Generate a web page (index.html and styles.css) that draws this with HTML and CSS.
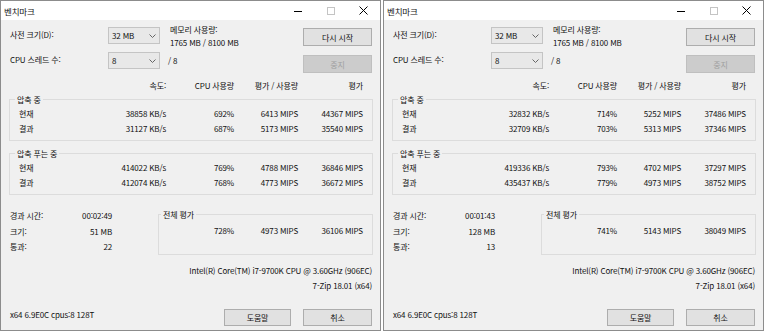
FILE: index.html
```html
<!DOCTYPE html>
<html lang="ko">
<head>
    <meta charset="UTF-8">
    <title>벤치마크</title>
    <link rel="stylesheet" href="styles.css">
</head>
<body>
    <div class="win">
        <div class="titlebar">
            <div class="title">벤치마크</div>
            <div class="caps">
                <div class="cap"><svg width="8" height="8" viewBox="0 0 8 8"><path d="M0 4.5H8" stroke="#000" stroke-width="1"/></svg></div>
                <div class="cap"><svg width="8" height="8" viewBox="0 0 8 8"><rect x="0.5" y="0.5" width="7" height="7" fill="none" stroke="#c4c4c4"/></svg></div>
                <div class="cap"><svg width="9" height="9" viewBox="0 0 9 9"><path d="M0.5 0.5L8.5 8.5M8.5 0.5L0.5 8.5" stroke="#000" stroke-width="1"/></svg></div>
            </div>
        </div>
        <div class="content">
            <div class="top">
                <div class="lbl">사전 크기(D):</div>
                <div class="combo"><span>32 MB</span><svg class="chev" width="7" height="4" viewBox="0 0 7 4"><path d="M0.5 0.5L3.5 3.5L6.5 0.5" fill="none" stroke="#666"/></svg></div>
                <div class="mem">메모리 사용량:<br>1765 MB / 8100 MB</div>
                <button class="btn first">다시 시작</button>
                <div class="lbl">CPU 스레드 수:</div>
                <div class="combo"><span>8</span><svg class="chev" width="7" height="4" viewBox="0 0 7 4"><path d="M0.5 0.5L3.5 3.5L6.5 0.5" fill="none" stroke="#666"/></svg></div>
                <div class="threads">/ 8</div>
                <button class="btn off">중지</button>
            </div>

            <div class="cols head">
                <span></span><span>속도:</span><span>CPU 사용량</span><span>평가 / 사용량</span><span>평가</span>
            </div>

            <fieldset class="group">
                <legend>압축 중</legend>
                <div class="cols"><span class="name">현재</span><span>38858 KB/s</span><span>692%</span><span>6413 MIPS</span><span>44367 MIPS</span></div>
                <div class="cols"><span class="name">결과</span><span>31127 KB/s</span><span>687%</span><span>5173 MIPS</span><span>35540 MIPS</span></div>
            </fieldset>

            <fieldset class="group second">
                <legend>압축 푸는 중</legend>
                <div class="cols"><span class="name">현재</span><span>414022 KB/s</span><span>769%</span><span>4788 MIPS</span><span>36846 MIPS</span></div>
                <div class="cols"><span class="name">결과</span><span>412074 KB/s</span><span>768%</span><span>4773 MIPS</span><span>36672 MIPS</span></div>
            </fieldset>

            <div class="bottom">
                <div class="stats">
                    <span>경과 시간:</span><span>00:02:49</span>
                    <span>크기:</span><span>51 MB</span>
                    <span>통과:</span><span>22</span>
                </div>
                <fieldset class="total">
                    <legend>전체 평가</legend>
                    <div class="sum"><span>728%</span><span>4973 MIPS</span><span>36106 MIPS</span></div>
                </fieldset>
            </div>

            <div class="info">Intel(R) Core(TM) i7-9700K CPU @ 3.60GHz (906EC)</div>
            <div class="info">7-Zip 18.01 (x64)</div>

            <div class="footer">
                <div class="ver">x64 6.9E0C cpus:8 128T</div>
                <button class="btn help">도움말</button>
                <button class="btn cancel">취소</button>
            </div>
        </div>
    </div>

    <div class="win">
        <div class="titlebar">
            <div class="title">벤치마크</div>
            <div class="caps">
                <div class="cap"><svg width="8" height="8" viewBox="0 0 8 8"><path d="M0 4.5H8" stroke="#000" stroke-width="1"/></svg></div>
                <div class="cap"><svg width="8" height="8" viewBox="0 0 8 8"><rect x="0.5" y="0.5" width="7" height="7" fill="none" stroke="#c4c4c4"/></svg></div>
                <div class="cap"><svg width="9" height="9" viewBox="0 0 9 9"><path d="M0.5 0.5L8.5 8.5M8.5 0.5L0.5 8.5" stroke="#000" stroke-width="1"/></svg></div>
            </div>
        </div>
        <div class="content">
            <div class="top">
                <div class="lbl">사전 크기(D):</div>
                <div class="combo"><span>32 MB</span><svg class="chev" width="7" height="4" viewBox="0 0 7 4"><path d="M0.5 0.5L3.5 3.5L6.5 0.5" fill="none" stroke="#666"/></svg></div>
                <div class="mem">메모리 사용량:<br>1765 MB / 8100 MB</div>
                <button class="btn first">다시 시작</button>
                <div class="lbl">CPU 스레드 수:</div>
                <div class="combo"><span>8</span><svg class="chev" width="7" height="4" viewBox="0 0 7 4"><path d="M0.5 0.5L3.5 3.5L6.5 0.5" fill="none" stroke="#666"/></svg></div>
                <div class="threads">/ 8</div>
                <button class="btn off">중지</button>
            </div>

            <div class="cols head">
                <span></span><span>속도:</span><span>CPU 사용량</span><span>평가 / 사용량</span><span>평가</span>
            </div>

            <fieldset class="group">
                <legend>압축 중</legend>
                <div class="cols"><span class="name">현재</span><span>32832 KB/s</span><span>714%</span><span>5252 MIPS</span><span>37486 MIPS</span></div>
                <div class="cols"><span class="name">결과</span><span>32709 KB/s</span><span>703%</span><span>5313 MIPS</span><span>37346 MIPS</span></div>
            </fieldset>

            <fieldset class="group second">
                <legend>압축 푸는 중</legend>
                <div class="cols"><span class="name">현재</span><span>419336 KB/s</span><span>793%</span><span>4702 MIPS</span><span>37297 MIPS</span></div>
                <div class="cols"><span class="name">결과</span><span>435437 KB/s</span><span>779%</span><span>4973 MIPS</span><span>38752 MIPS</span></div>
            </fieldset>

            <div class="bottom">
                <div class="stats">
                    <span>경과 시간:</span><span>00:01:43</span>
                    <span>크기:</span><span>128 MB</span>
                    <span>통과:</span><span>13</span>
                </div>
                <fieldset class="total">
                    <legend>전체 평가</legend>
                    <div class="sum"><span>741%</span><span>5143 MIPS</span><span>38049 MIPS</span></div>
                </fieldset>
            </div>

            <div class="info">Intel(R) Core(TM) i7-9700K CPU @ 3.60GHz (906EC)</div>
            <div class="info">7-Zip 18.01 (x64)</div>

            <div class="footer">
                <div class="ver">x64 6.9E0C cpus:8 128T</div>
                <button class="btn help">도움말</button>
                <button class="btn cancel">취소</button>
            </div>
        </div>
    </div>
</body>
</html>
```

FILE: styles.css
```css
* {
    box-sizing: border-box;
}

body {
    margin: 0;
    display: flex;
    gap: 2px;
    background: #fff;
    font-family: "Noto Sans CJK KR", "Liberation Sans", sans-serif;
    font-size: 8px;
    letter-spacing: -0.15px;
    color: #111;
}

.win {
    width: 381px;
    height: 331px;
    border: 1px solid #8c8c8c;
    background: #f0f0f0;
    display: flex;
    flex-direction: column;
}

.titlebar {
    height: 19px;
    background: #fff;
    display: flex;
    align-items: center;
    padding-left: 3px;
}

.title {
    flex: 1;
    font-size: 8.5px;
}

.caps {
    display: flex;
}

.cap {
    width: 33px;
    height: 19px;
    display: flex;
    align-items: center;
    justify-content: center;
}

.cap svg {
    display: block;
}

.content {
    padding: 7px 7px 0 8px;
}

/* top controls */
.top {
    display: grid;
    grid-template-columns: 99px 52px 1fr 70px;
    grid-template-rows: 19px 21px;
    row-gap: 6px;
}

.lbl {
    padding-left: 1px;
    line-height: 16px;
}

.combo {
    height: 17px;
    background: #e8e8e8;
    border: 1px solid #c4c4c4;
    display: flex;
    align-items: center;
    padding-left: 3px;
}

.chev {
    margin-left: auto;
    margin-right: 3px;
}

.mem {
    padding-left: 10px;
    line-height: 13px;
    margin-top: -4px;
}

.threads {
    padding-left: 8px;
    line-height: 17px;
}

.btn {
    font: inherit;
    letter-spacing: inherit;
    color: #111;
    width: 69px;
    height: 18px;
    padding: 0;
    background: #e1e1e1;
    border: 1px solid #adadad;
}

.btn.first {
    margin-top: 1px;
}

.btn.off {
    margin-top: 3px;
    background: #cccccc;
    border-color: #bfbfbf;
    color: #a0a0a0;
}

/* result rows */
.cols {
    display: grid;
    grid-template-columns: 60px 1fr 68px 64px 65px;
    line-height: 15px;
    text-align: right;
}

.cols .name {
    text-align: left;
}

.head {
    margin-top: 6px;
    padding: 0 10px;
    line-height: 13px;
}

fieldset {
    margin: 0;
    border: 1px solid #dcdcdc;
    min-width: 0;
}

legend {
    margin-left: -4px;
    padding: 0 2px;
    line-height: 13px;
}

.group {
    margin-top: 1px;
    padding: 0 9px 4px;
}

.group.second {
    margin-top: 6px;
}

.bottom {
    display: flex;
    margin-top: 13px;
}

.stats {
    width: 103px;
    display: grid;
    grid-template-columns: 1fr auto;
    line-height: 15.5px;
    align-content: start;
    padding-left: 1px;
}

.stats span:nth-child(even) {
    text-align: right;
}

.total {
    flex: 1;
    margin-left: 46px;
    padding: 2px 9px 8px 6px;
}

.sum {
    display: grid;
    grid-template-columns: 1fr 64px 65px;
    line-height: 15px;
    text-align: right;
}

.info {
    text-align: right;
    padding-right: 1px;
    line-height: 15px;
}

.bottom + .info {
    margin-top: 8px;
}

.footer {
    display: flex;
    margin-top: 16px;
    align-items: flex-start;
}

.ver {
    flex: 1;
    padding-left: 1px;
    line-height: 15px;
    margin-top: -2px;
}

.btn.help {
    width: 67px;
    height: 17px;
    margin-right: 12px;
}

.btn.cancel {
    height: 17px;
    margin-right: 1px;
}
```
